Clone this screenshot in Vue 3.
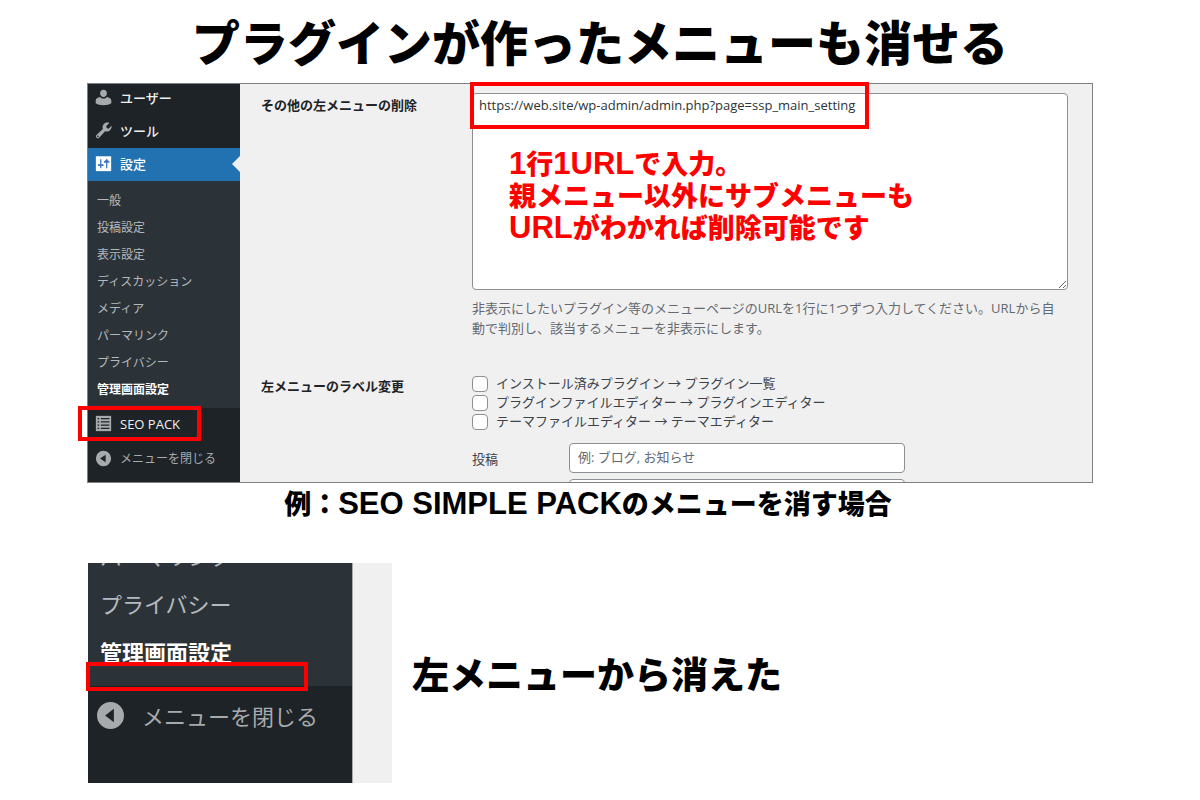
<script setup>
import { ref } from 'vue'

const submenu = [
  '一般',
  '投稿設定',
  '表示設定',
  'ディスカッション',
  'メディア',
  'パーマリンク',
  'プライバシー',
  '管理画面設定',
]
const renames = [
  'インストール済みプラグイン → プラグイン一覧',
  'プラグインファイルエディター → プラグインエディター',
  'テーマファイルエディター → テーマエディター',
]
const checked = ref([])
const urls = ref('https://web.site/wp-admin/admin.php?page=ssp_main_setting')
const postLabel = ref('')
const pageLabel = ref('')
</script>

<template>
  <main class="page">
    <h1 class="title">プラグインが作ったメニューも消せる</h1>

    <section class="shot">
      <div class="screen">
        <nav class="side">
          <a class="item" href="#">
            <svg class="icon" viewBox="0 0 20 20"><path d="M10 9.500C7.600 9.500 6 7.500 6 5c0-2.400 1.600-4 4-4s4 1.600 4 4c0 2.500-1.600 4.500-4 4.500zM.8 16.800v-3C.8 11.200 3 9.700 6 9.400c1 1.200 2.400 1.900 4 1.900s3-.7 4-1.900c3 .3 5.200 1.800 5.200 4.400v3c-1.900 1.400-5.300 2.200-9.200 2.200s-7.300-.8-9.200-2.200z" /></svg>
            <span>ユーザー</span>
          </a>
          <a class="item" href="#">
            <svg class="icon" viewBox="0 0 20 20"><path d="M17.600 9.600c-1.600 1.600-3.800 2-5.700 1.400l-7 7.500c-.9.900-2.300.9-3.200 0s-.9-2.300 0-3.200L9.200 8.300C8.500 6.300 8.900 4 10.500 2.400 12.200.7 14.800.2 16.900 1.200L13.200 4.800l.6 2.300 2.300.7 3.200-3.400c.8 1.700-.1 3.600-1.700 5.200zM3.300 17.800a1 1 0 1 0 0-2 1 1 0 0 0 0 2z" fill-rule="evenodd" /></svg>
            <span>ツール</span>
          </a>
          <a class="item current" href="#">
            <svg class="icon" viewBox="0 0 20 20">
              <path d="M1 1.500h18v17.500H1z" />
              <path class="cut" d="M6 5h1.500v6H10v2H7.500v2.500H6V13H3.500v-2H6zM13 15.500h1.500V9H17V7h-1l-2.200-2.500L11.500 7h-1v2H13z" />
            </svg>
            <span>設定</span>
          </a>
          <div class="sub">
            <a v-for="(s, i) in submenu" :key="s" href="#" :class="{ on: i === submenu.length - 1 }">{{ s }}</a>
          </div>
          <a class="item seo" href="#">
            <svg class="icon" viewBox="0 0 20 20">
              <path d="M1 1h18v18H1z" />
              <path class="dark" d="M3 3.500h2V5H3zM7 3.500h10V5H7zM3 7.300h2v1.500H3zM7 7.300h10v1.500H7zM3 11.200h2v1.500H3zM7 11.200h10v1.500H7zM3 15h2v1.500H3zM7 15h10v1.500H7z" />
            </svg>
            <span>SEO PACK</span>
          </a>
          <button class="item fold" type="button">
            <svg class="icon" viewBox="0 0 20 20"><path d="M10 1a9 9 0 1 0 0 18 9 9 0 0 0 0-18zM12.500 5.500v9L6 10z" fill-rule="evenodd" /></svg>
            <span>メニューを閉じる</span>
          </button>
        </nav>

        <div class="form">
          <label class="head" for="urls">その他の左メニューの削除</label>
          <div class="field">
            <div class="area">
              <textarea id="urls" v-model="urls" spellcheck="false"></textarea>
              <p class="note">
                <span class="lat">1</span>行<span class="lat">1URL</span>で入力。<br />親メニュー以外にサブメニューも<br /><span class="lat">URL</span>がわかれば削除可能です
              </p>
            </div>
            <p class="desc">非表示にしたいプラグイン等のメニューページのURLを1行に1つずつ入力してください。URLから自動で判別し、該当するメニューを非表示にします。</p>
          </div>

          <div class="head">左メニューのラベル変更</div>
          <div class="field">
            <label v-for="r in renames" :key="r" class="check">
              <input v-model="checked" type="checkbox" :value="r" />{{ r }}
            </label>
            <div class="names">
              <label for="post">投稿</label>
              <input id="post" v-model="postLabel" type="text" placeholder="例: ブログ, お知らせ" />
              <label for="fixed"></label>
              <input id="fixed" v-model="pageLabel" type="text" aria-label="ラベル" />
            </div>
          </div>
        </div>
      </div>
      <div class="frame frame-url"></div>
      <div class="frame frame-seo"></div>
    </section>

    <p class="caption">例：<span class="lat">SEO SIMPLE PACK</span>のメニューを消す場合</p>

    <section class="after">
      <div class="closeup">
        <div class="crop">
          <nav class="zoomed">
            <div class="zsub">
              <a href="#">パーマリンク</a>
              <a href="#">プライバシー</a>
              <a href="#" class="on">管理画面設定</a>
            </div>
            <button class="zfold" type="button">
              <svg viewBox="0 0 20 20"><path d="M10 0a10 10 0 1 0 0 20 10 10 0 0 0 0-20zM12.500 5v10L6 10z" fill-rule="evenodd" /></svg>
              <span>メニューを閉じる</span>
            </button>
          </nav>
        </div>
        <div class="frame frame-gone"></div>
      </div>
      <p class="result">左メニューから消えた</p>
    </section>
  </main>
</template>

<style>
body {
  margin: 0;
  background: #fff;
}
</style>

<style scoped>
.page {
  font-family: "Open Sans", "Noto Sans CJK JP", sans-serif;
  font-size: 13px;
  color: #3c434a;
  padding: 0 107px 17px 87px;
}
.page * {
  box-sizing: border-box;
}
p,
h1 {
  margin: 0;
}
a {
  text-decoration: none;
}
button {
  border: 0;
  background: none;
  font: inherit;
  text-align: left;
}
.title,
.caption,
.result,
.note {
  font-family: "Noto Sans CJK JP", sans-serif;
  font-weight: 900;
  color: #000;
}
.lat {
  font-family: "Liberation Sans", Arial, sans-serif;
  font-size: 31px;
  font-weight: 700;
  line-height: 1;
}
.title {
  margin-right: -20px;
  padding-bottom: 3px;
  text-align: center;
  font-size: 48px;
  line-height: 80px;
  white-space: nowrap;
}
.shot {
  position: relative;
}
.screen {
  display: flex;
  height: 400px;
  overflow: hidden;
  border: 1px solid #808080;
  background: #f0f0f0;
}
.frame {
  position: absolute;
  border: 4px solid #f00;
  pointer-events: none;
}
.frame-url {
  left: 383px;
  top: -1px;
  width: 399px;
  height: 47px;
}
.frame-seo {
  left: -9px;
  top: 323px;
  width: 123px;
  height: 35px;
}

/* admin sidebar */
.side {
  flex: none;
  width: 152px;
  margin-top: -2px;
  background: #1d2327;
}
.item {
  position: relative;
  display: flex;
  align-items: center;
  gap: 8px;
  width: 100%;
  height: 33px;
  padding: 0 7px 2px;
  color: #f0f0f1;
  font-weight: 500;
}
.icon {
  flex: none;
  width: 17px;
  height: 17px;
  fill: #a7aaad;
}
.current {
  background: #2271b1;
  color: #fff;
}
.current .icon {
  fill: #fff;
}
.current .cut {
  fill: #3b76c4;
}
.current::after {
  content: "";
  position: absolute;
  right: 0;
  top: 8px;
  border: 8px solid transparent;
  border-left: 0;
  border-right-color: #f0f0f0;
}
.sub {
  padding: 6px 0 5px;
  background: #2c3338;
}
.sub a {
  display: block;
  padding-left: 9px;
  font-size: 12px;
  line-height: 27px;
  color: #b4b9be;
}
.sub a.on,
.zsub a.on {
  color: #fff;
  font-weight: 700;
}
.seo {
  font-weight: 400;
}
.seo .dark {
  fill: #1d2327;
}
.fold {
  height: 36px;
  color: #a7aaad;
  font-size: 12px;
  font-weight: 400;
}

/* settings form */
.form {
  flex: 1;
  display: grid;
  grid-template-columns: 211px 1fr;
  align-content: start;
  padding: 9px 20px 0 21px;
  row-gap: 36px;
}
.head {
  color: #1d2327;
  font-weight: 700;
  line-height: 24px;
}
.field {
  min-width: 0;
}
.area {
  position: relative;
  margin-right: 4px;
}
textarea {
  display: block;
  width: 100%;
  height: 197px;
  padding: 2px 6px;
  border: 1px solid #8c8f94;
  border-radius: 4px;
  background: #fff;
  color: #2c3338;
  font: 13px/19px "Open Sans", "Noto Sans CJK JP", sans-serif;
}
.note {
  position: absolute;
  left: 37px;
  top: 54px;
  color: #f00;
  font-size: 27px;
  line-height: 32px;
  white-space: nowrap;
  pointer-events: none;
}
.desc {
  margin-top: 8px;
  padding-right: 8px;
  color: #646970;
  line-height: 20px;
}
.check {
  display: flex;
  align-items: center;
  gap: 8px;
  line-height: 19px;
}
.check input {
  appearance: none;
  width: 16px;
  height: 16px;
  margin: 0;
  border: 1px solid #8c8f94;
  border-radius: 4px;
  background: #fff;
}
.names {
  display: grid;
  grid-template-columns: 97px 336px;
  align-items: center;
  row-gap: 6px;
  margin-top: 12px;
}
.names input {
  height: 30px;
  padding: 0 8px 2px;
  border: 1px solid #8c8f94;
  border-radius: 4px;
  background: #fff;
  color: #2c3338;
  font: 13px "Open Sans", "Noto Sans CJK JP", sans-serif;
}
.names input::placeholder {
  color: #646970;
  opacity: 1;
}
.caption {
  margin-right: 4px;
  text-align: center;
  font-size: 27px;
  line-height: 40px;
  white-space: nowrap;
}

/* enlarged result */
.after {
  display: flex;
  align-items: center;
  gap: 20px;
  margin: 40px 0 0 1px;
}
.closeup {
  position: relative;
  flex: none;
  width: 304px;
}
.crop {
  height: 220px;
  overflow: hidden;
  background: #f0f0f0;
}
.zoomed {
  width: 265px;
  height: 100%;
  background: #1d2327;
  border-right: 1px solid #a7aaad;
  font-size: 22px;
}
.zsub {
  display: flex;
  flex-direction: column;
  justify-content: flex-end;
  height: 123px;
  padding: 0 12px 10px;
  background: #2c3338;
}
.zsub a {
  flex: none;
  color: #b4b9be;
  line-height: 48px;
}
.zfold {
  display: flex;
  align-items: center;
  gap: 18px;
  width: 100%;
  height: 58px;
  padding: 0 9px;
  color: #a7aaad;
}
.zfold svg {
  flex: none;
  width: 27px;
  height: 27px;
  fill: #a7aaad;
}
.frame-gone {
  left: -2px;
  top: 99px;
  width: 222px;
  height: 29px;
}
.result {
  font-size: 37px;
  line-height: 48px;
  white-space: nowrap;
}
</style>
